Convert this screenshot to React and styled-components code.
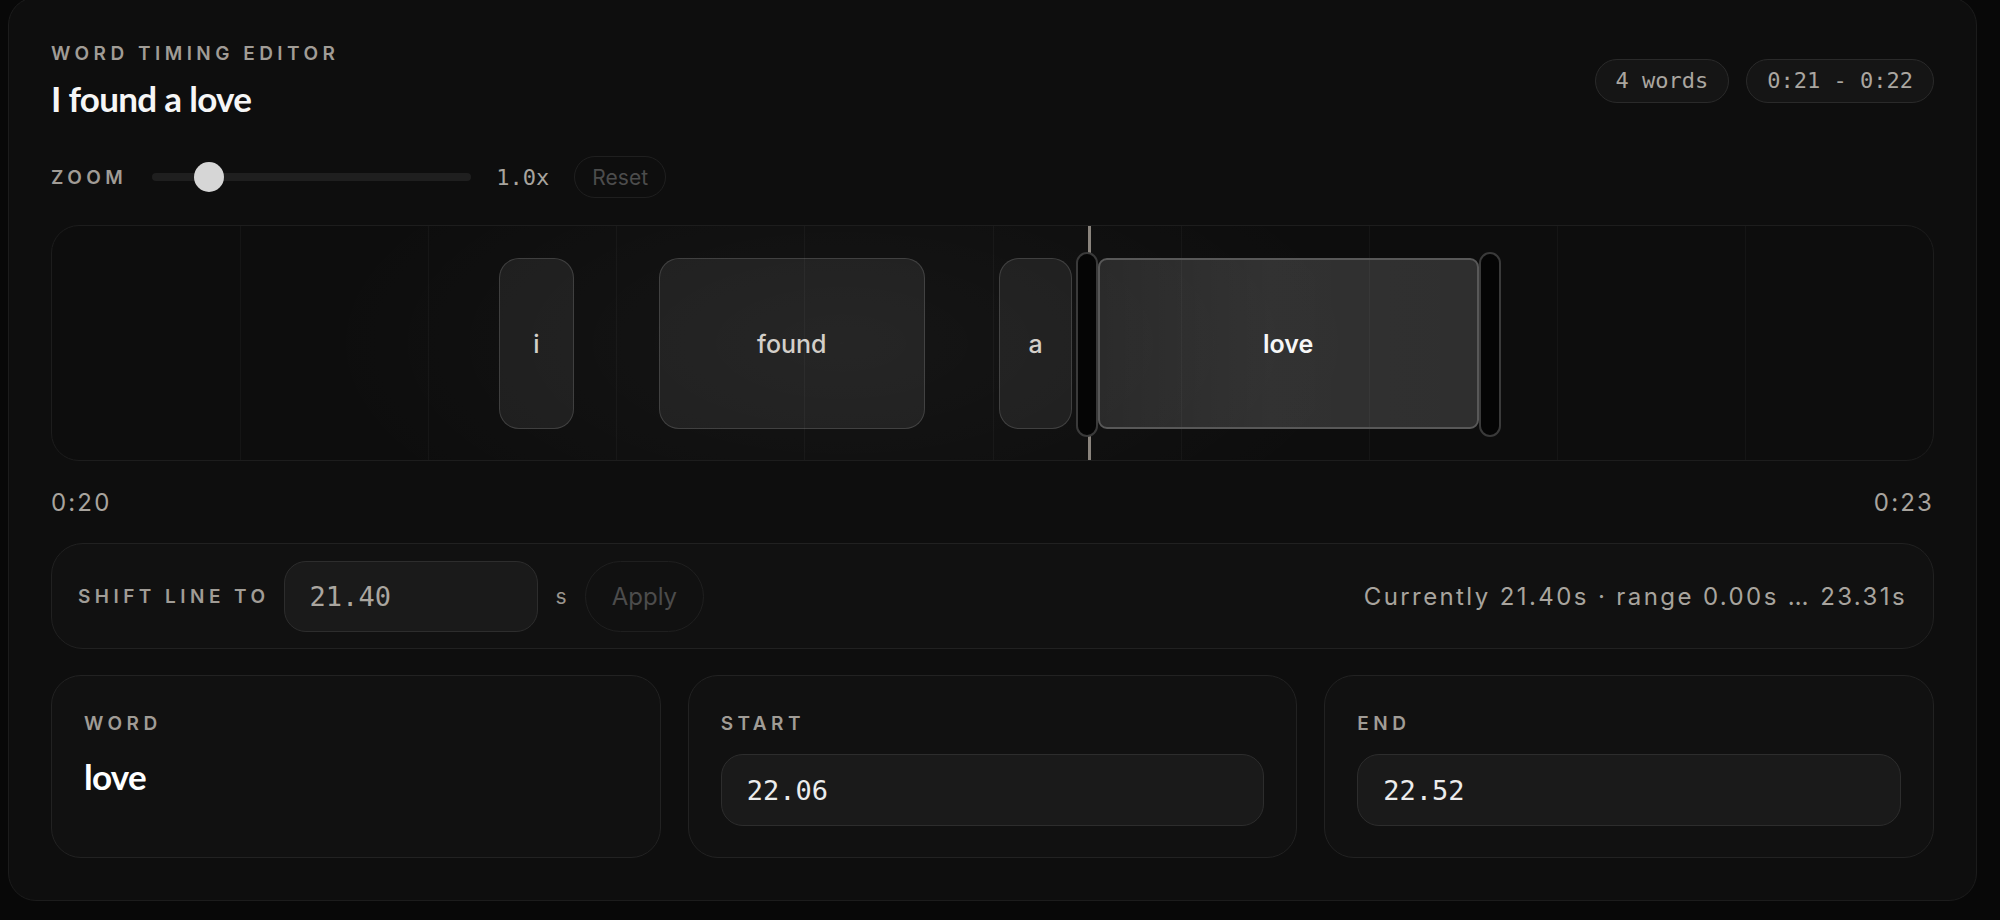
import React from 'react'
import styled, { createGlobalStyle } from 'styled-components'

const MONO = `"DejaVu Sans Mono", "Liberation Mono", monospace`
const DISPLAY = `Lato, Inter, sans-serif`

const GlobalStyle = createGlobalStyle`
    html, body{
        margin:0;
        padding:0;
        background:#080808;
    }
    body{
        font-family: Inter, "Noto Sans", sans-serif;
        color:#e8e8e8;
        overflow:hidden;
    }
    *{ box-sizing:border-box; }
`

const Page = styled.div`
    padding:0 23px 0 8px;
`

const Editor = styled.section`
    margin-top:-3px;
    height:904px;
    background:#0e0e0e;
    border:1px solid #1c1c1c;
    border-radius:28px;
    padding:44px 42px 0;
    display:flex;
    flex-direction:column;
`

const Header = styled.header`
    display:flex;
    align-items:center;
    justify-content:space-between;
`

const Caps = styled.div`
    font-size:19px;
    font-weight:600;
    letter-spacing:0.235em;
    text-transform:uppercase;
    color:#a09c96;
    white-space:nowrap;
`

const ShiftLabel = styled(Caps)`
    margin-right:-4px;
`

const Title = styled.h1`
    margin:12px 0 0;
    font-family:${DISPLAY};
    font-size:35px;
    font-weight:700;
    line-height:1.2;
    letter-spacing:-0.02em;
    color:#f6f6f6;
`

const Chips = styled.div`
    display:flex;
    gap:17px;
`

const Chip = styled.span`
    display:flex;
    align-items:center;
    height:44px;
    padding:0 20px;
    border:1px solid #2a2a2a;
    border-radius:22px;
    background:#151515;
    font-family:${MONO};
    font-size:22px;
    color:#aaa6a0;
`

const ZoomRow = styled.div`
    margin-top:37px;
    height:42px;
    display:flex;
    align-items:center;
    gap:25px;
`

const Track = styled.div`
    position:relative;
    width:319px;
    height:8px;
    border-radius:4px;
    background:#1f1f1f;
`

const Thumb = styled.div`
    position:absolute;
    top:50%;
    width:30px;
    height:30px;
    margin-top:-15px;
    border-radius:50%;
    background:#d6d6d6;
`

const Mono = styled.span`
    font-family:${MONO};
    font-size:22px;
    color:#a8a49e;
`

const GhostButton = styled.button`
    height:${({tall})=> tall ? 71 : 42}px;
    padding:0 ${({tall})=> tall ? 26 : 17}px;
    border:1px solid #1f1f1f;
    border-radius:36px;
    background:transparent;
    font-family:Inter, sans-serif;
    font-size:${({tall})=> tall ? 24 : 21}px;
    color:#4c4c4c;
`

const Timeline = styled.div`
    position:relative;
    margin-top:27px;
    height:236px;
    border:1px solid #1d1d1d;
    border-radius:28px;
    overflow:hidden;
    background:
        radial-gradient(ellipse 28% 100% at 42% 50%, rgba(255,255,255,0.035), transparent 100%),
        #0d0d0d;
`

const GridLine = styled.div`
    position:absolute;
    top:0;
    bottom:0;
    width:1px;
    background:rgba(255,255,255,0.035);
`

const WordBlock = styled.div`
    position:absolute;
    top:32px;
    height:171px;
    display:flex;
    align-items:center;
    justify-content:center;
    border-radius:${({active})=> active ? 9 : 20}px;
    border:${({active})=> active ? '2px solid #585858' : '1px solid rgba(255,255,255,0.14)'};
    background:${({active})=> active
        ? 'linear-gradient(90deg, rgba(255,255,255,0.11), rgba(255,255,255,0.15) 45%, rgba(255,255,255,0.14))'
        : 'rgba(255,255,255,0.07)'};
    font-size:25px;
    font-weight:${({active})=> active ? 600 : 500};
    color:${({active})=> active ? '#f7f7f7' : '#d3cfc9'};
`

const Handle = styled.div`
    position:absolute;
    top:26px;
    width:22px;
    height:185px;
    border:2px solid #3a3a3a;
    border-radius:11px;
    background:#050505;
    z-index:2;
`

const Playhead = styled.div`
    position:absolute;
    top:0;
    bottom:0;
    width:3px;
    background:#8a847d;
    z-index:1;
`

const Scale = styled.div`
    margin-top:27px;
    display:flex;
    justify-content:space-between;
    font-size:24px;
    letter-spacing:0.09em;
    color:#a8a49e;
`

const ShiftBar = styled.div`
    margin-top:26px;
    height:106px;
    padding:0 26px;
    display:flex;
    align-items:center;
    gap:18px;
    border:1px solid #212121;
    border-radius:32px;
    background:#111;
`

const NumberInput = styled.input`
    width:${({w})=> w ? `${w}px` : '100%'};
    height:${({h})=> h || 72}px;
    padding:0 25px;
    border:1px solid #2d2d2d;
    border-radius:22px;
    background:#1a1a1a;
    font-family:${MONO};
    font-size:27px;
    color:${({muted})=> muted ? '#aaa6a0' : '#ececec'};
    outline:none;
`

const Unit = styled.span`
    font-size:21px;
    color:#9a968f;
`

const Hint = styled.span`
    margin-left:auto;
    font-size:24px;
    letter-spacing:0.1em;
    color:#a8a49e;
    white-space:nowrap;
`

const Fields = styled.div`
    margin-top:26px;
    display:grid;
    grid-template-columns:repeat(3, 1fr);
    gap:27px;
`

const FieldCard = styled.div`
    height:183px;
    padding:36px 32px 0;
    border:1px solid #222;
    border-radius:30px;
    background:#111;
    display:flex;
    flex-direction:column;
`

const FieldWord = styled.div`
    margin-top:20px;
    font-family:${DISPLAY};
    font-size:35px;
    font-weight:700;
    line-height:1.2;
    letter-spacing:-0.02em;
    color:#fff;
`

const FieldSlot = styled.div`
    margin-top:19px;
`

const view = {start:20.8, end:20.8 + 1881/828}
const words = [
    {text:'i', start:21.340, end:21.430},
    {text:'found', start:21.533, end:21.854},
    {text:'a', start:21.944, end:22.032},
    {text:'love', start:22.063, end:22.523},
]
const activeIndex = 3
const playhead = 22.052
const zoom = {value:1.0, min:0.5, max:4}

const pct = t => ((t - view.start) / (view.end - view.start)) * 100
const fmt = s => `${Math.floor(s/60)}:${String(Math.floor(s%60)).padStart(2,'0')}`

export default function App(){
    const active = words[activeIndex]
    const thumbLeft = ((zoom.value - zoom.min) / (zoom.max - zoom.min)) * (319 - 30)
    return (<Page>
        <GlobalStyle/>
        <Editor>
            <Header>
                <div>
                    <Caps>Word timing editor</Caps>
                    <Title>I found a love</Title>
                </div>
                <Chips>
                    <Chip>{words.length} words</Chip>
                    <Chip>{fmt(words[0].start)} - {fmt(active.end)}</Chip>
                </Chips>
            </Header>

            <ZoomRow>
                <Caps>Zoom</Caps>
                <Track>
                    <Thumb style={{left:thumbLeft}}/>
                </Track>
                <Mono>{zoom.value.toFixed(1)}x</Mono>
                <GhostButton>Reset</GhostButton>
            </ZoomRow>

            <Timeline>
                {Array.from({length:9}, (_, i)=>(
                    <GridLine key={i} style={{left:`${(i+1)*10}%`}}/>
                ))}
                {words.map((w, i)=>(
                    <WordBlock key={w.text} active={i === activeIndex}
                        style={{left:`${pct(w.start)}%`, width:`${pct(w.end) - pct(w.start)}%`}}>
                        {w.text}
                    </WordBlock>
                ))}
                <Playhead style={{left:`calc(${pct(playhead)}% - 1px)`}}/>
                <Handle style={{left:`calc(${pct(active.start)}% - 22px)`}}/>
                <Handle style={{left:`${pct(active.end)}%`}}/>
            </Timeline>

            <Scale>
                <span>{fmt(view.start)}</span>
                <span>{fmt(view.end + 0.5)}</span>
            </Scale>

            <ShiftBar>
                <ShiftLabel>Shift line to</ShiftLabel>
                <NumberInput w={254} h={71} muted defaultValue="21.40"/>
                <Unit>s</Unit>
                <GhostButton tall>Apply</GhostButton>
                <Hint>Currently 21.40s · range 0.00s … 23.31s</Hint>
            </ShiftBar>

            <Fields>
                <FieldCard>
                    <Caps>Word</Caps>
                    <FieldWord>{active.text}</FieldWord>
                </FieldCard>
                <FieldCard>
                    <Caps>Start</Caps>
                    <FieldSlot><NumberInput defaultValue={active.start.toFixed(2)}/></FieldSlot>
                </FieldCard>
                <FieldCard>
                    <Caps>End</Caps>
                    <FieldSlot><NumberInput defaultValue={active.end.toFixed(2)}/></FieldSlot>
                </FieldCard>
            </Fields>
        </Editor>
    </Page>)
}
